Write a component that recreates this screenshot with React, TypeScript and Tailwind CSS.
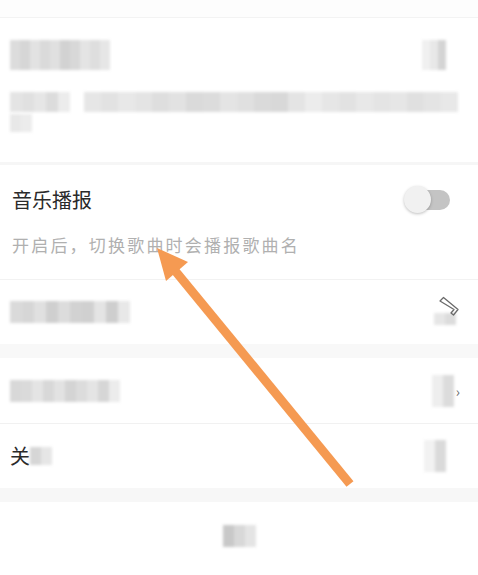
import React from "react";

const font = { fontFamily: '"Noto Sans CJK SC", "Noto Sans", sans-serif' };

function Mosaic({ cells, h = "h-[22px]", w = "w-[10px]" }: { cells: string[]; h?: string; w?: string }) {
  return (
    <div className="flex blur-[1.5px]">
      {cells.map((c, i) => (
        <div key={i} className={`${h} ${w}`} style={{ backgroundColor: c }} />
      ))}
    </div>
  );
}

function Chevron() {
  return (
    <svg width="22" height="22" viewBox="0 0 22 22" fill="none">
      <path d="M2 5L5.5 1.5L20 13.5L15.5 19L13 17L16 13.5Z" stroke="#6a6a6a" strokeWidth="1.3" strokeLinejoin="round" />
    </svg>
  );
}

export default function App() {
  return (
    <div className="relative w-[478px] h-[575px] overflow-hidden bg-white text-[#222]" style={font}>
      <div className="h-[18px] bg-[#fdfdfd] border-b border-[#f3f3f3]" />

      {/* row 1 blurred */}
      <div className="h-[144px] px-[10px] pt-[22px]">
        <div className="flex justify-between items-center">
          <Mosaic cells={["#dcdcdc", "#d6d6d6", "#e2e2e2", "#dadada", "#e0e0e0", "#d2d2d2", "#d8d8d8", "#e4e4e4", "#dedede", "#e6e6e6"]} h="h-[30px]" />
          <div className="mr-[22px]">
            <Mosaic cells={["#f0f0f0", "#e8e8e8", "#d4d4d4"]} h="h-[30px]" w="w-[8px]" />
          </div>
        </div>
        <div className="mt-[22px] flex gap-[14px]">
          <Mosaic cells={["#e4e4e4", "#e0e0e0", "#e6e6e6", "#dcdcdc", "#ececec"]} h="h-[20px]" w="w-[12px]" />
          <Mosaic cells={["#e6e6e6", "#e2e2e2", "#e8e8e8", "#e4e4e4", "#dedede", "#e2e2e2", "#dadada", "#dcdcdc", "#e4e4e4", "#e0e0e0", "#dadada", "#d8d8d8", "#e4e4e4", "#ececec", "#e6e6e6", "#e2e2e2", "#e8e8e8", "#e4e4e4", "#e6e6e6", "#e0e0e0", "#e4e4e4", "#e8e8e8"]} h="h-[20px]" w="w-[17px]" />
        </div>
        <div className="mt-[2px]">
          <Mosaic cells={["#e8e8e8", "#ececec"]} h="h-[18px]" w="w-[11px]" />
        </div>
      </div>
      <div className="h-[3px] bg-[#f6f6f6]" />

      {/* music announce */}
      <div className="h-[115px] px-[12px] border-b border-[#f2f2f2]">
        <div className="flex justify-between items-center pt-[21px]">
          <span className="text-[20px] leading-[28px] text-[#2a2a2a]">音乐播报</span>
          <div className="relative w-[46px] h-[28px] mr-[16px]">
            <div className="absolute right-0 top-[4px] w-[34px] h-[20px] rounded-full bg-[#c4c4c4]" />
            <div className="absolute left-0 top-0 w-[27px] h-[27px] rounded-full bg-[#f1f1f1] shadow-[0_1px_3px_rgba(0,0,0,0.25)]" />
          </div>
        </div>
        <p className="mt-[19px] text-[17px] leading-[24px] text-[#b0b0b0] tracking-[2.2px]">开启后，切换歌曲时会播报歌曲名</p>
      </div>

      {/* row 3 */}
      <div className="h-[64px] px-[10px] flex justify-between items-center">
        <Mosaic cells={["#dadada", "#d6d6d6", "#e0e0e0", "#cfcfcf", "#dcdcdc", "#d2d2d2", "#d0d0d0", "#e4e4e4", "#cecece", "#e8e8e8"]} h="h-[22px]" w="w-[12px]" />
        <div className="relative mr-[10px] w-[24px] h-[30px]">
          <div className="absolute left-0 bottom-[2px]">
            <Mosaic cells={["#e6e6e6", "#dcdcdc"]} h="h-[12px]" w="w-[11px]" />
          </div>
          <div className="absolute right-[-2px] top-[-1px]">
            <Chevron />
          </div>
        </div>
      </div>
      <div className="h-[14px] bg-[#f8f8f8]" />

      {/* row 4 */}
      <div className="h-[66px] px-[10px] flex justify-between items-center border-b border-[#f1f1f1]">
        <Mosaic cells={["#d8d8d8", "#dadada", "#e4e4e4", "#d8d8d8", "#e2e2e2", "#d4d4d4", "#dcdcdc", "#e4e4e4", "#d6d6d6", "#ececec"]} h="h-[22px]" w="w-[11px]" />
        <div className="relative mr-[14px] flex">
          <Mosaic cells={["#eeeeee", "#dcdcdc"]} h="h-[32px]" w="w-[11px]" />
          <span className="absolute right-[-6px] top-[6px] text-[14px] text-[#666]">›</span>
        </div>
      </div>

      {/* row 5 */}
      <div className="h-[64px] px-[10px] flex justify-between items-center">
        <div className="flex items-center">
          <span className="text-[20px] leading-[28px] text-[#2a2a2a]">关</span>
          <Mosaic cells={["#d6d6d6", "#e6e6e6"]} h="h-[18px]" w="w-[11px]" />
        </div>
        <div className="mr-[22px]">
          <Mosaic cells={["#f2f2f2", "#dadada"]} h="h-[32px]" w="w-[11px]" />
        </div>
      </div>
      <div className="h-[14px] bg-[#f7f7f7]" />

      {/* bottom */}
      <div className="flex justify-center pt-[23px]">
        <Mosaic cells={["#c8c8c8", "#d8d8d8", "#e4e4e4"]} h="h-[22px]" w="w-[11px]" />
      </div>

      {/* annotation arrow */}
      <svg className="absolute inset-0 pointer-events-none" width="478" height="575" viewBox="0 0 478 575">
        <line x1="350" y1="484" x2="172" y2="267" stroke="#f59a52" strokeWidth="9" />
        <polygon points="157,248 188,262 166,281" fill="#f59a52" />
      </svg>
    </div>
  );
}
